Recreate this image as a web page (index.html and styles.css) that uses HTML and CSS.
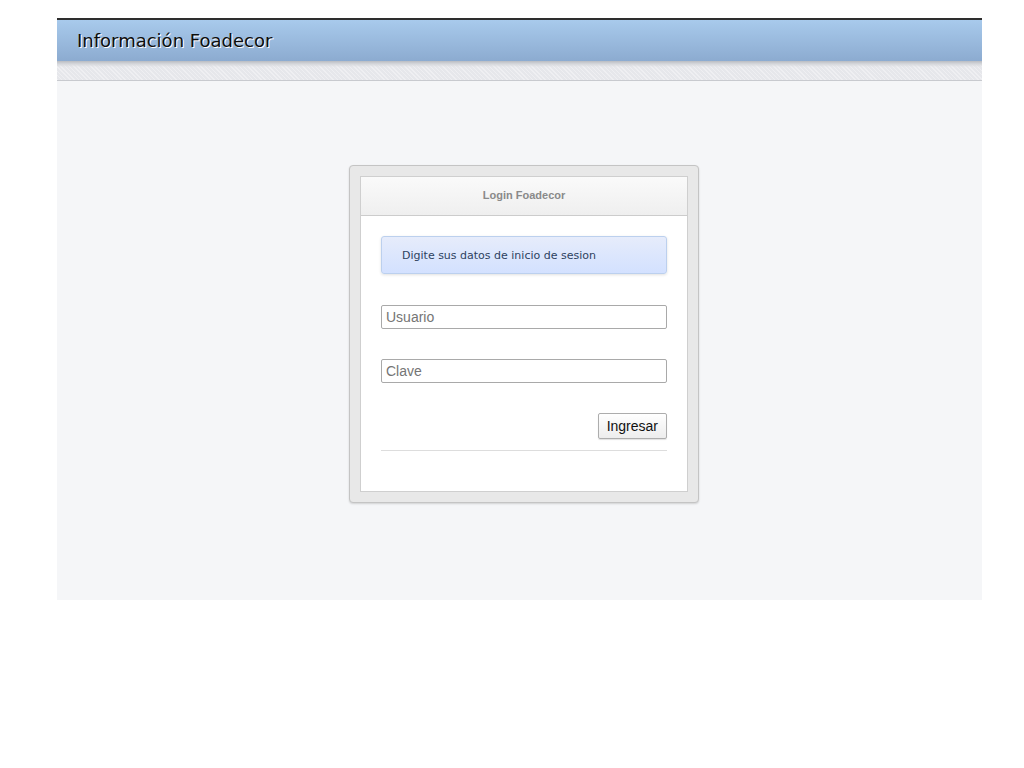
FILE: index.html
```html
<!DOCTYPE html>
<html lang="es">
<head>
<meta charset="utf-8">
<title>Información Foadecor</title>
<link rel="stylesheet" href="styles.css">
</head>
<body>
<div class="page">
  <header class="topbar">
    <h1 class="title">Información Foadecor</h1>
  </header>
  <div class="band"></div>
  <main class="main">
    <div class="login-frame">
      <div class="login">
        <div class="login-head">Login Foadecor</div>
        <div class="login-body">
          <div class="alert">Digite sus datos de inicio de sesion</div>
          <input class="field" type="text" placeholder="Usuario">
          <input class="field" type="password" placeholder="Clave">
          <div class="actions">
            <button class="btn" type="button">Ingresar</button>
          </div>
          <div class="rule"></div>
        </div>
      </div>
    </div>
  </main>
</div>
</body>
</html>
```
FILE: styles.css
```css
html, body {
  margin: 0;
  padding: 0;
  background: #fff;
}
.page {
  margin: 18px 0 0 57px;
  width: 925px;
}
.topbar {
  border-top: 2px solid #2e2e2e;
  height: 43px;
  background: linear-gradient(#a8caec, #8cabd0);
  box-sizing: border-box;
  display: flex;
  align-items: center;
  padding-left: 20px;
}
.title {
  margin: 0;
  font-family: "DejaVu Sans", Verdana, sans-serif;
  font-weight: normal;
  font-size: 18px;
  color: #0d0d0d;
  text-shadow: 1px 1px 0 #fff;
}
.band {
  height: 19px;
  background-color: #e6e7eb;
  background-image:
    linear-gradient(#b9bcc2 0, #d6d8dc 3px, rgba(230,231,235,0) 6px),
    repeating-linear-gradient(45deg, rgba(255,255,255,0.35) 0 1px, rgba(0,0,0,0) 1px 3px);
  border-bottom: 1px solid #c8cacf;
}
.main {
  height: 519px;
  background: #f5f6f8;
  padding-top: 84px;
  box-sizing: border-box;
}
.login-frame {
  width: 328px;
  margin-left: 292px;
  padding: 10px;
  background: #e8e8e8;
  border: 1px solid #c4c4c4;
  border-radius: 4px;
  box-shadow: 0 1px 2px rgba(0,0,0,0.15);
}
.login {
  background: #fff;
  border: 1px solid #cfcfcf;
}
.login-head {
  height: 38px;
  line-height: 37px;
  text-align: center;
  font-family: "Liberation Sans", Arial, sans-serif;
  font-weight: bold;
  font-size: 11px;
  color: #8a8a8a;
  background: linear-gradient(#fafafa, #efefef);
  border-bottom: 1px solid #cccccc;
}
.login-body {
  padding: 20px 20px 40px;
  display: flex;
  flex-direction: column;
}
.alert {
  height: 38px;
  box-sizing: border-box;
  border: 1px solid #bcd0ee;
  border-radius: 3px;
  background: linear-gradient(#e6ecfb, #d3e1ff);
  box-shadow: 0 1px 3px rgba(0,0,0,0.12);
  font-family: "DejaVu Sans", Verdana, sans-serif;
  font-size: 11px;
  color: #2d4260;
  padding: 1px 0 0 20px;
  display: flex;
  align-items: center;
}
.field {
  margin-top: 31px;
  height: 24px;
  box-sizing: border-box;
  border: 1px solid #a9a9a9;
  border-radius: 2px;
  padding: 0 4px;
  font-family: "Liberation Sans", Arial, sans-serif;
  font-size: 14px;
  color: #333;
  background: #fff;
  outline: none;
}
.field + .field {
  margin-top: 30px;
}
.field::placeholder {
  color: #757575;
}
.actions {
  margin-top: 30px;
  display: flex;
  justify-content: flex-end;
}
.btn {
  height: 26px;
  padding: 0 8px;
  font-family: "Liberation Sans", Arial, sans-serif;
  font-size: 14px;
  color: #111;
  background: linear-gradient(#ffffff, #ededed);
  border: 1px solid #adadad;
  border-radius: 2px;
  box-shadow: 0 1px 1px rgba(0,0,0,0.12);
}
.rule {
  margin-top: 11px;
  height: 1px;
  background: #dddddd;
}
```
